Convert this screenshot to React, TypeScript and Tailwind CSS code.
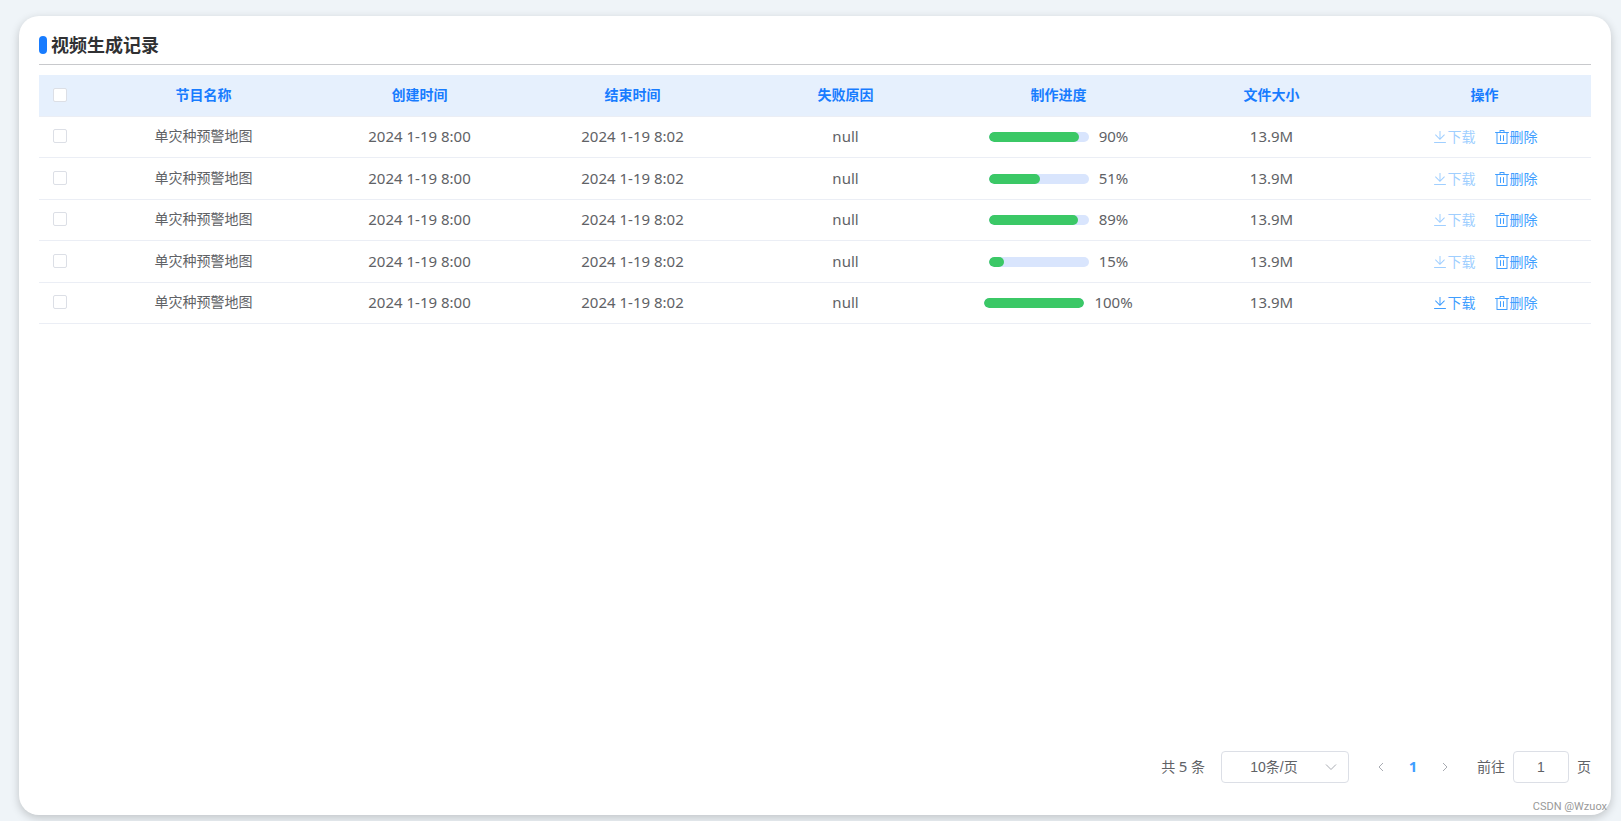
import { useState } from 'react';
import clsx from 'clsx';

interface VideoRecord {
  id: number;
  name: string;
  createdAt: string;
  finishedAt: string;
  failReason: string | null;
  progress: number;
  size: string;
}

const base = {
  name: '单灾种预警地图',
  createdAt: '2024 1-19 8:00',
  finishedAt: '2024 1-19 8:02',
  failReason: null,
  size: '13.9M',
};

const records: VideoRecord[] = [90, 51, 89, 15, 100].map((progress, index) => ({
  ...base,
  id: index + 1,
  progress,
}));

const columns = ['创建时间', '结束时间', '失败原因', '制作进度', '文件大小', '操作'];

function DownloadIcon() {
  return (
    <svg viewBox="0 0 1024 1024" fill="currentColor" className="w-4 h-4" aria-hidden="true">
      <path d="M160 832h704a32 32 0 1 1 0 64H160a32 32 0 1 1 0-64zm384-253.696 236.288-236.352 45.248 45.248L508.8 704 192 387.2l45.248-45.248L480 584.704V128h64v450.304z" />
    </svg>
  );
}

function DeleteIcon() {
  return (
    <svg viewBox="0 0 1024 1024" fill="currentColor" className="w-4 h-4" aria-hidden="true">
      <path d="M160 256H96a32 32 0 0 1 0-64h256V95.936a32 32 0 0 1 32-32h256a32 32 0 0 1 32 32V192h256a32 32 0 1 1 0 64h-64v672a32 32 0 0 1-32 32H192a32 32 0 0 1-32-32V256zm448-64v-64H416v64h192zM224 896h576V256H224v640zm192-128a32 32 0 0 1-32-32V416a32 32 0 0 1 64 0v320a32 32 0 0 1-32 32zm192 0a32 32 0 0 1-32-32V416a32 32 0 0 1 64 0v320a32 32 0 0 1-32 32z" />
    </svg>
  );
}

function Chevron({ d, className }: { d: string; className: string }) {
  return (
    <svg viewBox="0 0 16 16" fill="none" stroke="currentColor" className={className} aria-hidden="true">
      <path d={d} />
    </svg>
  );
}

interface CheckboxProps {
  label: string;
  checked: boolean;
  onChange: () => void;
}

function Checkbox({ label, checked, onChange }: CheckboxProps) {
  return (
    <input
      type="checkbox"
      aria-label={label}
      checked={checked}
      onChange={onChange}
      className="block ml-3.5 w-3.5 h-3.5 appearance-none rounded-xs border border-[#dcdfe6] bg-white checked:border-[#409eff] checked:bg-[#409eff]"
    />
  );
}

function Progress({ value }: { value: number }) {
  return (
    <div className="flex items-center justify-center gap-2.5">
      <div className="w-[100px] h-2.5 mt-0.5 rounded-full bg-[#d9e5fd] overflow-hidden">
        <div className="h-full rounded-full bg-[#3bc866]" style={{ width: `${value}%` }} />
      </div>
      <span>{value}%</span>
    </div>
  );
}

function RecordTable() {
  const [selected, setSelected] = useState<number[]>([]);
  const allSelected = selected.length === records.length;

  const toggle = (id: number) =>
    setSelected(selected.includes(id) ? selected.filter((item) => item !== id) : [...selected, id]);

  return (
    <table className="w-full mt-2.5 table-fixed border-separate border-spacing-0 text-center text-[15px] leading-5 text-[#606266]">
      <colgroup>
        <col className="w-[55px]" />
        <col className="w-[219px]" />
        {columns.map((column) => (
          <col key={column} />
        ))}
      </colgroup>
      <thead className="[&_th]:p-0 [&_th]:pb-0.5 [&_th]:border-b [&_th]:border-[#ebeef5]">
        <tr className="h-[42px] bg-[#e6f0fd] text-sm font-bold text-[#187cff]">
          <th>
            <Checkbox
              label="全选"
              checked={allSelected}
              onChange={() => setSelected(allSelected ? [] : records.map((record) => record.id))}
            />
          </th>
          <th>节目名称</th>
          {columns.map((column) => (
            <th key={column}>{column}</th>
          ))}
        </tr>
      </thead>
      <tbody className="[&_td]:p-0 [&_td]:pb-0.5 [&_td]:border-b [&_td]:border-[#ebeef5]">
        {records.map((record) => (
          <tr key={record.id} className="odd:h-[41px] even:h-[42px]">
            <td>
              <Checkbox
                label={`选择第${record.id}行`}
                checked={selected.includes(record.id)}
                onChange={() => toggle(record.id)}
              />
            </td>
            <td className="text-sm">{record.name}</td>
            <td>{record.createdAt}</td>
            <td>{record.finishedAt}</td>
            <td>{String(record.failReason)}</td>
            <td><Progress value={record.progress} /></td>
            <td>{record.size}</td>
            <td>
              <div className="flex justify-center gap-[18px] pt-0.5 text-sm text-[#409eff]">
                <button
                  type="button"
                  disabled={record.progress < 100}
                  className={clsx('flex items-center', record.progress < 100 && 'text-[#a0cfff]')}
                >
                  <DownloadIcon />
                  下载
                </button>
                <button type="button" className="flex items-center">
                  <DeleteIcon />
                  删除
                </button>
              </div>
            </td>
          </tr>
        ))}
      </tbody>
    </table>
  );
}

function Pagination() {
  return (
    <div className="flex items-center justify-end gap-4 text-sm text-[#606266]">
      <span>共 <span className="text-[15px]">5</span> 条</span>
      <div className="relative">
        <select
          aria-label="每页条数"
          defaultValue="10"
          className="block w-32 h-8 pl-[11px] pr-[33px] appearance-none rounded border border-[#dcdfe6] bg-white text-center font-['Liberation_Sans','Noto_Sans_CJK_SC',sans-serif]"
        >
          <option value="10">10条/页</option>
          <option value="20">20条/页</option>
          <option value="50">50条/页</option>
        </select>
        <Chevron d="M3 5.5l5 5 5-5" className="absolute right-2.5 top-2 w-4 h-4 text-[#a8abb2] pointer-events-none" />
      </div>
      <nav aria-label="分页" className="flex items-center">
        <button type="button" aria-label="上一页" disabled className="flex items-center justify-center w-8 h-8 text-[#a8abb2]">
          <Chevron d="M10 4L6 8l4 4" className="w-4 h-4" />
        </button>
        <button type="button" aria-current="page" className="w-8 h-8 text-[15px] font-bold text-[#409eff]">
          1
        </button>
        <button type="button" aria-label="下一页" disabled className="flex items-center justify-center w-8 h-8 text-[#a8abb2]">
          <Chevron d="M6 4l4 4-4 4" className="w-4 h-4" />
        </button>
      </nav>
      <label className="flex items-center gap-2">
        前往
        <input
          type="text"
          defaultValue="1"
          className="w-14 h-8 rounded border border-[#dcdfe6] bg-white text-center font-['Liberation_Sans',sans-serif]"
        />
        页
      </label>
    </div>
  );
}

export default function App() {
  return (
    <div className="flex min-h-screen bg-[#eff4f8] pt-4 pr-2.5 pb-1.5 pl-[19px] font-['Noto_Sans','Noto_Sans_CJK_SC',sans-serif]">
      <main className="relative flex flex-col flex-1 px-5 pt-4 pb-8 rounded-[20px] bg-white shadow-[0_3px_10px_rgba(0,0,0,0.2)]">
        <header className="flex items-center gap-1 h-[33px] pb-1.5 border-b border-[#c8c9cc]">
          <span className="w-2 h-[18px] rounded-full bg-[#187cff]" />
          <h1 className="text-lg leading-6 font-bold text-[#303133]">视频生成记录</h1>
        </header>
        <div className="flex-1">
          <RecordTable />
        </div>
        <Pagination />
        <span className="absolute right-1 bottom-0 text-[11px] leading-4 text-[#999] font-['Roboto',sans-serif]">
          CSDN @Wzuox
        </span>
      </main>
    </div>
  );
}
